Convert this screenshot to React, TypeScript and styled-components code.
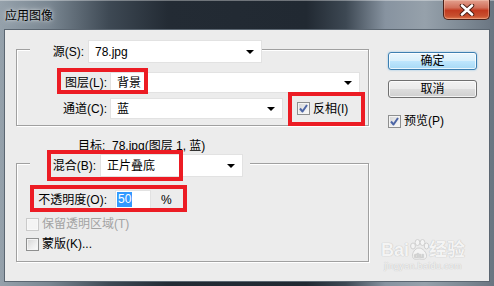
import React, { FC, ReactNode } from "react";
import styled, { createGlobalStyle } from "styled-components";

const GlobalStyle = createGlobalStyle`
  html, body {
    margin: 0;
    padding: 0;
    background: #1f2730;
  }
  body {
    font-family: "Liberation Sans", "Noto Sans CJK SC", sans-serif;
    font-size: 12px;
    color: #000;
  }
`;

const Dropdown: FC<{ value?: string; width: number; height?: number }> = ({ value, width, height = 23 }) => (
  <Select style={{ width, height }}>
    <span>{value}</span>
    <Arrow />
  </Select>
);

const CheckBox: FC<{ checked?: boolean; disabled?: boolean; children: ReactNode }> = ({ checked, disabled, children }) => (
  <CheckItem $disabled={disabled}>
    <Box $disabled={disabled}>
      {checked && (
        <svg width="11" height="11" viewBox="0 0 11 11">
          <path d="M2 5.5 L4.5 8.5 L9 2" fill="none" stroke="#4d66a6" strokeWidth="2" strokeLinejoin="round" />
        </svg>
      )}
    </Box>
    <span>{children}</span>
  </CheckItem>
);

export default function App() {
  return (
    <>
      <GlobalStyle />
      <Window>
        <TitleBar>
          <Title>应用图像</Title>
          <CloseButton>
            <svg width="16" height="12" viewBox="0 0 16 12">
              <path d="M3 1.5 L13 10.5 M13 1.5 L3 10.5" stroke="#4a1d12" strokeWidth="4.5" strokeLinecap="round" />
              <path d="M3 1.5 L13 10.5 M13 1.5 L3 10.5" stroke="#ffffff" strokeWidth="2.6" strokeLinecap="round" />
            </svg>
          </CloseButton>
        </TitleBar>

        <Client>
          <LeftCol>
            <GroupBox $height={77}>
              <GroupHeader $width={232}>
                <Label>源(S):</Label>
                <Dropdown value="78.jpg" width={174} />
              </GroupHeader>

              <Row $top={9}>
                <FieldLabel>图层(L):</FieldLabel>
                <Dropdown value="背景" width={250} height={21} />
                <Mark style={{ left: 40, top: -4, width: 91, height: 26 }} />
              </Row>

              <Row $top={5}>
                <FieldLabel>通道(C):</FieldLabel>
                <Dropdown value="蓝" width={173} height={21} />
                <InvertSlot>
                  <CheckBox checked>反相(I)</CheckBox>
                </InvertSlot>
                <Mark style={{ left: 271, top: -6, width: 77, height: 34 }} />
              </Row>
            </GroupBox>

            <TargetLine>目标:&nbsp;&nbsp;78.jpg(图层 1, 蓝)</TargetLine>

            <GroupBox $height={99}>
              <GroupHeader $width={220} $padRight={7}>
                <Label>混合(B):</Label>
                <Dropdown value="正片叠底" width={143} />
                <Mark style={{ left: 17, top: -4, width: 136, height: 31 }} />
              </GroupHeader>

              <Row $top={13}>
                <FieldLabel $gap={8}>不透明度(O):</FieldLabel>
                <NumberBox>
                  <Selected>50</Selected>
                </NumberBox>
                <Unit>%</Unit>
                <Mark style={{ left: 13, top: -5, width: 157, height: 27 }} />
              </Row>

              <CheckRow $top={7}>
                <CheckBox disabled>保留透明区域(T)</CheckBox>
              </CheckRow>
              <CheckRow $top={4}>
                <CheckBox>蒙版(K)...</CheckBox>
              </CheckRow>
            </GroupBox>
          </LeftCol>

          <RightCol>
            <Button $primary>确定</Button>
            <Button>取消</Button>
            <PreviewRow>
              <CheckBox checked>预览(P)</CheckBox>
            </PreviewRow>
          </RightCol>

          <Watermark>
            <WatermarkLogo>
              Bai
              <svg width="20" height="22" viewBox="0 0 20 22">
                <g fill="#f4f4f4" stroke="#d0d0d0" strokeWidth="1">
                  <ellipse cx="4" cy="7" rx="2.4" ry="3" />
                  <ellipse cx="8.5" cy="3.5" rx="2.4" ry="3" />
                  <ellipse cx="13.5" cy="3.5" rx="2.4" ry="3" />
                  <ellipse cx="17.5" cy="7" rx="2.2" ry="3" />
                  <path d="M10 9 C6 9 3 14 3.5 17.5 C4 21 8 20.5 10.5 20 C13 20.5 17 21 17.5 17.5 C18 14 14 9 10 9 Z" />
                </g>
                <text x="5" y="19" fontSize="8" fontWeight="bold" fill="#d4d4d4" fontFamily="Liberation Sans, sans-serif">du</text>
              </svg>
              经验
            </WatermarkLogo>
            <WatermarkUrl>jingyan.baidu.com</WatermarkUrl>
          </Watermark>
        </Client>
      </Window>
    </>
  );
}

const Window = styled.div`
  width: 494px;
  height: 286px;
  display: flex;
  flex-direction: column;
  overflow: hidden;
  background: linear-gradient(
    90deg,
    #95a1ab 0%,
    #7a8792 10%,
    #3e4954 22%,
    #232b34 34%,
    #212932 62%,
    #3d4853 70%,
    #8793a0 78%,
    #96a1ab 86%,
    #7d8994 94%,
    #6a7581 100%
  );
`;

const TitleBar = styled.div`
  height: 29px;
  display: flex;
  justify-content: space-between;
  align-items: flex-start;
  box-shadow: inset 0 1px 0 rgba(255, 255, 255, 0.35);
`;

const Title = styled.div`
  padding: 7px 0 0 5px;
  font-family: "Noto Sans CJK SC", sans-serif;
  font-size: 12px;
  line-height: 16px;
  color: #000;
  text-shadow: 0 0 6px rgba(255, 255, 255, 0.7), 0 0 3px rgba(255, 255, 255, 0.6);
`;

const CloseButton = styled.div`
  width: 47px;
  height: 20px;
  margin-right: 4px;
  box-sizing: border-box;
  border: 1px solid #4a2018;
  border-top: none;
  border-radius: 0 0 5px 5px;
  background: linear-gradient(180deg, #e3a08e 0%, #d1705a 40%, #c23a1f 55%, #c8502f 85%, #e07a50 100%);
  box-shadow: inset 0 0 0 1px rgba(255, 220, 200, 0.35);
  display: flex;
  align-items: center;
  justify-content: center;
`;

const Client = styled.div`
  position: relative;
  box-sizing: border-box;
  width: 486px;
  height: 253px;
  margin: 0 4px;
  border: 1px solid #5b6671;
  background: #ececec;
  padding: 10px 0 0 11px;
  display: flex;
  align-items: flex-start;
`;

const LeftCol = styled.div`
  width: 353px;
  display: flex;
  flex-direction: column;
`;

const RightCol = styled.div`
  margin-left: 19px;
  padding-top: 12px;
  display: flex;
  flex-direction: column;
  gap: 10px;
`;

const GroupBox = styled.div<{ $height: number }>`
  box-sizing: border-box;
  height: ${(p) => p.$height}px;
  margin-top: 9px;
  border: 1px solid #a0a0a0;
  box-shadow: inset 1px 1px 0 #ffffff, 1px 1px 0 #ffffff;
  display: flex;
  flex-direction: column;
  align-items: flex-start;
`;

const GroupHeader = styled.div<{ $width: number; $padRight?: number }>`
  position: relative;
  box-sizing: border-box;
  width: ${(p) => p.$width}px;
  height: 23px;
  margin: -10px 0 0 13px;
  padding-right: ${(p) => p.$padRight ?? 0}px;
  background: #ececec;
  display: flex;
  align-items: center;
  justify-content: flex-end;
  gap: 4px;
`;

const Label = styled.span`
  line-height: 16px;
  white-space: nowrap;
`;

const Row = styled.div<{ $top: number }>`
  position: relative;
  margin-top: ${(p) => p.$top}px;
  display: flex;
  align-items: center;
`;

const FieldLabel = styled.span<{ $gap?: number }>`
  width: 90px;
  margin-right: ${(p) => p.$gap ?? 3}px;
  text-align: right;
  line-height: 16px;
  white-space: nowrap;
`;

const Select = styled.div`
  box-sizing: border-box;
  display: flex;
  align-items: center;
  justify-content: space-between;
  padding: 1px 6px 0 6px;
  background: #ffffff;
  border: 1px solid #e2e2e2;
  line-height: 16px;
`;

const Arrow = styled.span`
  width: 0;
  height: 0;
  border-left: 4px solid transparent;
  border-right: 4px solid transparent;
  border-top: 4px solid #000;
  margin-right: 1px;
`;

const InvertSlot = styled.div`
  margin-left: 14px;
`;

const CheckItem = styled.label<{ $disabled?: boolean }>`
  display: flex;
  align-items: center;
  gap: 3px;
  line-height: 16px;
  color: ${(p) => (p.$disabled ? "#a3a3a3" : "#000")};
  white-space: nowrap;
`;

const Box = styled.span<{ $disabled?: boolean }>`
  box-sizing: border-box;
  width: 13px;
  height: 13px;
  display: flex;
  align-items: center;
  justify-content: center;
  border: 1px solid ${(p) => (p.$disabled ? "#cacaca" : "#8e8f8f")};
  background: ${(p) =>
    p.$disabled
      ? "#f4f4f4"
      : "linear-gradient(135deg, #d4d4d4 0%, #eeeeee 60%, #fbfbfb 100%)"};
  box-shadow: inset 0 0 0 1px ${(p) => (p.$disabled ? "#f8f8f8" : "#f4f4f4")};
`;

const Mark = styled.div`
  position: absolute;
  box-sizing: border-box;
  border: 4px solid #ec1c24;
  pointer-events: none;
`;

const TargetLine = styled.div`
  margin-top: 12px;
  padding-left: 62px;
  line-height: 16px;
  white-space: nowrap;
`;

const NumberBox = styled.div`
  box-sizing: border-box;
  width: 36px;
  height: 19px;
  background: #fff;
  border: 1px solid #e2e2e2;
  display: flex;
  align-items: center;
  padding-left: 1px;
`;

const Selected = styled.span`
  background: #3399ff;
  color: #fff;
  line-height: 15px;
  padding: 0 1px;
`;

const Unit = styled.span`
  margin-left: 10px;
  line-height: 16px;
`;

const CheckRow = styled.div<{ $top: number }>`
  margin-top: ${(p) => p.$top}px;
  padding-left: 9px;
`;

const Button = styled.div<{ $primary?: boolean }>`
  box-sizing: border-box;
  width: 89px;
  height: 18px;
  border-radius: 3px;
  border: 1px solid ${(p) => (p.$primary ? "#3c7fb1" : "#707070")};
  background: ${(p) =>
    p.$primary
      ? "linear-gradient(180deg, #eaf6fd 0%, #d9f0fc 48%, #bee6fd 52%, #a7d9f5 100%)"
      : "linear-gradient(180deg, #f2f2f2 0%, #ebebeb 48%, #dddddd 52%, #cfcfcf 100%)"};
  box-shadow: inset 0 0 0 1px rgba(255, 255, 255, 0.75)
    ${(p) => (p.$primary ? ", 0 0 2px rgba(60, 160, 230, 0.6)" : "")};
  display: flex;
  align-items: center;
  justify-content: center;
  line-height: 14px;
`;

const PreviewRow = styled.div`
  margin-top: 5px;
`;

const Watermark = styled.div`
  position: absolute;
  right: 24px;
  bottom: 9px;
  display: flex;
  flex-direction: column;
  align-items: center;
  color: #f4f4f4;
  text-shadow: 0 0 1px #c4c4c4, 0 0 1px #c4c4c4;
  pointer-events: none;
`;

const WatermarkLogo = styled.div`
  display: flex;
  align-items: flex-end;
  font-family: "Liberation Sans", "Noto Sans CJK SC", sans-serif;
  font-weight: bold;
  font-size: 18px;
  line-height: 22px;
`;

const WatermarkUrl = styled.div`
  font-family: "Liberation Sans", sans-serif;
  font-size: 9px;
  line-height: 11px;
  letter-spacing: 0.3px;
`;
